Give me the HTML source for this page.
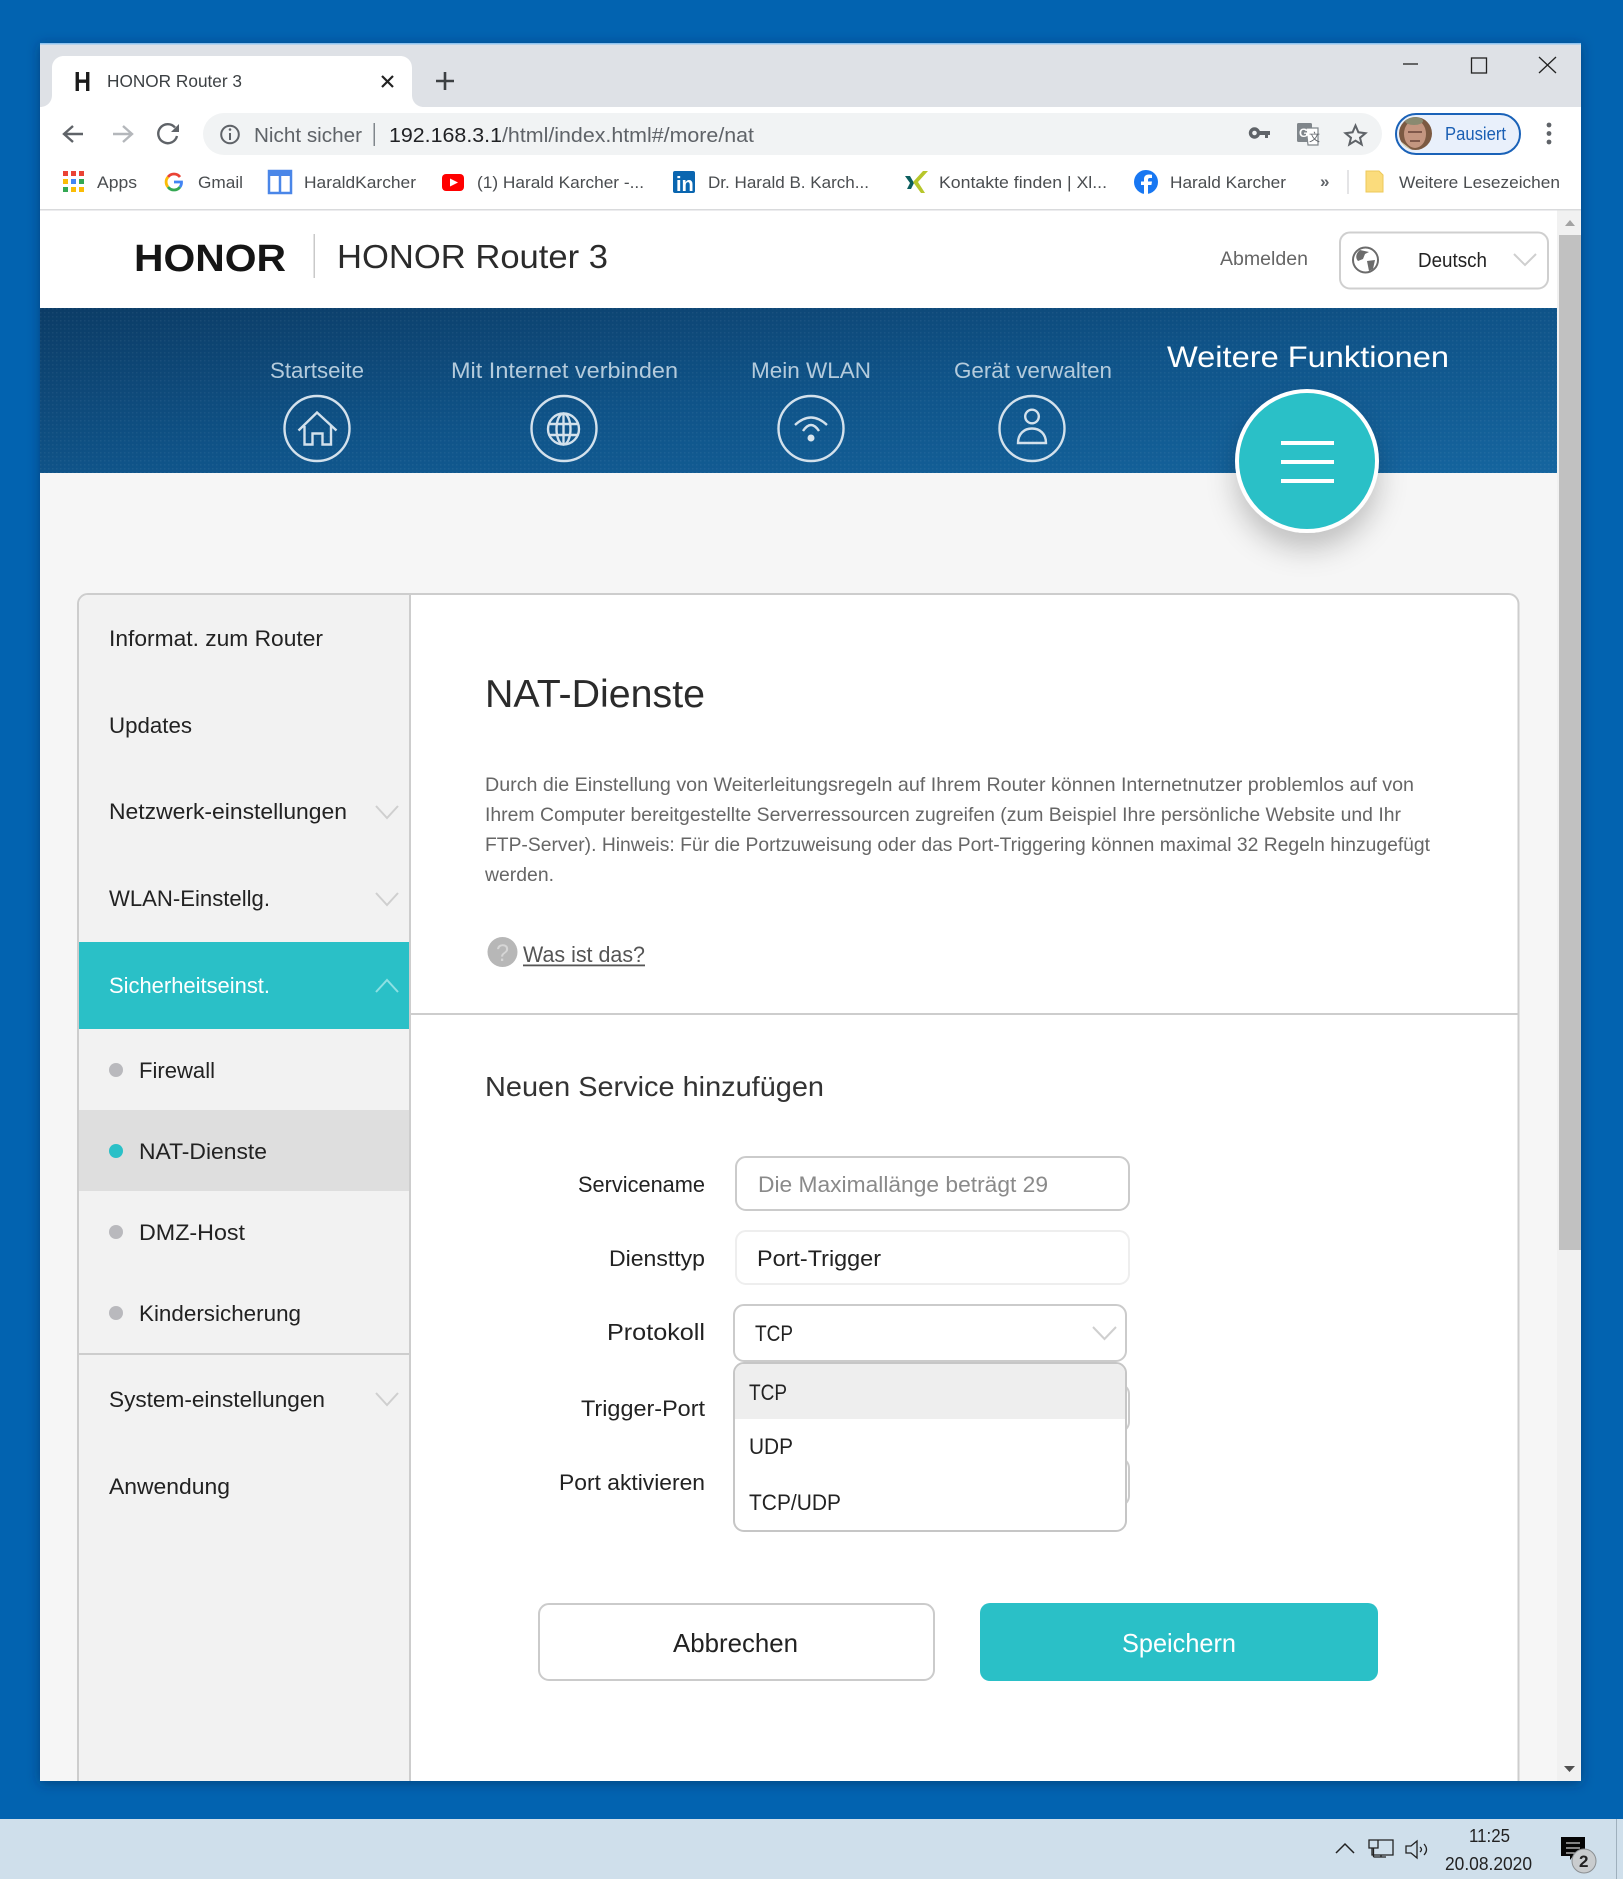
<!DOCTYPE html>
<html lang="de"><head><meta charset="utf-8"><title>HONOR Router 3</title>
<style>
html,body{margin:0;padding:0;width:1623px;height:1879px;overflow:hidden;background:#0263b0}
svg{display:block}
text{font-family:"Liberation Sans","Noto Sans CJK SC",sans-serif}
.bm{font-size:17px;fill:#4a4d50}
.sb{font-size:22px;fill:#222}
.lb{font-size:22px;fill:#222}
.nav{font-size:22px;fill:#b4cbdc}
.p{font-size:19.5px;fill:#666}
.ic{fill:none;stroke:#d3e1ec;stroke-width:2.4}
.chev{fill:none;stroke:#cfcfcf;stroke-width:2}
.tb{fill:none;stroke:#5f6368;stroke-width:2.4}
</style></head><body>
<svg width="1623" height="1879" viewBox="0 0 1623 1879" xmlns="http://www.w3.org/2000/svg">
<defs>
<linearGradient id="ban" x1="0" y1="0" x2="1" y2="1"><stop offset="0" stop-color="#0c3c66"/><stop offset=".5" stop-color="#0f5388"/><stop offset="1" stop-color="#15659f"/></linearGradient>
<pattern id="dots" width="4" height="4" patternUnits="userSpaceOnUse"><rect width="1.500" height="1.500" fill="#fff" fill-opacity=".05"/></pattern>
<filter id="sh" x="-40%" y="-40%" width="180%" height="200%"><feDropShadow dx="0" dy="16" stdDeviation="14" flood-color="#000" flood-opacity=".22"/></filter>
<filter id="ws" x="-3%" y="-3%" width="106%" height="106%"><feDropShadow dx="0" dy="2" stdDeviation="6" flood-color="#002c55" flood-opacity=".55"/></filter>
<clipPath id="av"><circle cx="1415.500" cy="133.500" r="16.500"/></clipPath>
<clipPath id="win"><rect x="40" y="43" width="1541" height="1738"/></clipPath>
</defs>

<rect width="1623" height="1879" fill="#0263b0"/>
<rect x="40" y="43" width="1541" height="1738" fill="#fff" filter="url(#ws)"/>
<g clip-path="url(#win)">
<!-- chrome -->
<rect x="40" y="43" width="1541" height="64" fill="#dee1e6"/>
<rect x="40" y="43" width="1541" height="1.500" fill="#8dc3ef"/>
<path d="M40 107C47 107 52 102 52 95V68C52 61 57 56 64 56H400C407 56 412 61 412 68V95C412 102 417 107 424 107Z" fill="#fff"/>
<text x="74" y="91" font-size="28" font-weight="700" fill="#1b1b1b" textLength="17" lengthAdjust="spacingAndGlyphs">H</text>
<text x="107" y="87" font-size="17.500" fill="#3c4043" textLength="135" lengthAdjust="spacingAndGlyphs">HONOR Router 3</text>
<path d="M382 76L393 87M393 76L382 87" stroke="#222" stroke-width="2.200" fill="none"/>
<path d="M445 72V90M436 81H454" stroke="#3c4043" stroke-width="2.600" fill="none"/>
<path d="M1403 64H1418" stroke="#222" stroke-width="1.300"/>
<rect x="1471.500" y="58" width="15" height="15" fill="none" stroke="#222" stroke-width="1.300"/>
<path d="M1539 57L1556 73M1556 57L1539 73" stroke="#222" stroke-width="1.300" fill="none"/>

<!-- toolbar -->
<rect x="40" y="107" width="1541" height="102" fill="#fff"/>
<rect x="203" y="113" width="1179" height="42" rx="21" fill="#f1f3f4"/>
<path class="tb" d="M83 134H65M73 126L64 134L73 142"/>
<path d="M131 134H113M123 126L132 134L123 142" fill="none" stroke="#b4b7bb" stroke-width="2.400"/>
<path class="tb" d="M177 136A9.500 9.500 0 1 1 175 127.500"/><path d="M179 124V132H171Z" fill="#5f6368"/>
<circle cx="230" cy="134.500" r="8.800" fill="none" stroke="#5f6368" stroke-width="2"/><path d="M230 133V140" stroke="#5f6368" stroke-width="2"/><circle cx="230" cy="129.500" r="1.300" fill="#5f6368"/>
<text x="254" y="142" font-size="20.500" fill="#5f6368" textLength="108" lengthAdjust="spacingAndGlyphs">Nicht sicher</text>
<rect x="373.500" y="123" width="1.500" height="23" fill="#80868b"/>
<text x="389" y="142" font-size="20.500" textLength="365" lengthAdjust="spacingAndGlyphs" fill="#5f6368"><tspan fill="#202124">192.168.3.1</tspan>/html/index.html#/more/nat</text>
<circle cx="1254.500" cy="133" r="4" fill="none" stroke="#5f6368" stroke-width="3.400"/><path d="M1259 131H1270V135H1268V138H1265V135H1259Z" fill="#5f6368"/>
<rect x="1297" y="123" width="15" height="19" rx="1.500" fill="#80868b"/><path d="M1306 128H1318V145H1308Z" fill="#fff" stroke="#80868b" stroke-width="1.200"/>
<text x="1299" y="137" font-size="12" font-weight="700" fill="#fff">G</text><text x="1309" y="141" font-size="11" fill="#5f6368">文</text>
<path d="M1355.500 125.500L1358.400 132.300L1365.500 133.200L1360 137.800L1361.700 144.500L1355.500 140.700L1349.300 144.500L1351 137.800L1345.500 133.200L1352.600 132.300Z" fill="none" stroke="#5f6368" stroke-width="2"/>
<rect x="1396" y="114" width="124" height="40" rx="20" fill="#e9f0fb" stroke="#1a62b8" stroke-width="2"/>
<g clip-path="url(#av)"><rect x="1399" y="117" width="33" height="33" fill="#7c5a42"/><path d="M1399 140L1412 150H1399Z" fill="#d8d2b0"/><ellipse cx="1415" cy="134" rx="11" ry="14" fill="#c49680"/><ellipse cx="1414" cy="121" rx="9" ry="4" fill="#8a8a70"/><path d="M1408 132H1422M1410 141H1420" stroke="#6a4438" stroke-width="1.500"/></g>
<text x="1445" y="140" font-size="18.500" fill="#1a5fb4" textLength="61" lengthAdjust="spacingAndGlyphs">Pausiert</text>
<circle cx="1549" cy="125" r="2.400" fill="#5f6368"/><circle cx="1549" cy="133.500" r="2.400" fill="#5f6368"/><circle cx="1549" cy="142" r="2.400" fill="#5f6368"/>

<!-- bookmarks -->
<g>
<rect x="63" y="171" width="5" height="5" fill="#ea4335"/><rect x="71" y="171" width="5" height="5" fill="#ea4335"/><rect x="79" y="171" width="5" height="5" fill="#ea4335"/>
<rect x="63" y="179" width="5" height="5" fill="#fbbc05"/><rect x="71" y="179" width="5" height="5" fill="#4285f4"/><rect x="79" y="179" width="5" height="5" fill="#34a853"/>
<rect x="63" y="187" width="5" height="5" fill="#34a853"/><rect x="71" y="187" width="5" height="5" fill="#fbbc05"/><rect x="79" y="187" width="5" height="5" fill="#fbbc05"/>
</g>
<text class="bm" x="97" y="188" textLength="40" lengthAdjust="spacingAndGlyphs">Apps</text>
<path d="M180 177A7.500 7.500 0 0 0 168 177" fill="none" stroke="#ea4335" stroke-width="2.800"/><path d="M168 177A7.500 7.500 0 0 0 168 187" fill="none" stroke="#fbbc05" stroke-width="2.800"/><path d="M168 187A7.500 7.500 0 0 0 180 187" fill="none" stroke="#34a853" stroke-width="2.800"/><path d="M180 187A7.500 7.500 0 0 0 181.500 182H174" fill="none" stroke="#4285f4" stroke-width="2.800"/>
<text class="bm" x="198" y="188" textLength="45" lengthAdjust="spacingAndGlyphs">Gmail</text>
<rect x="269" y="171" width="22" height="22" fill="#fff" stroke="#4a86e8" stroke-width="2.500"/><rect x="269" y="171" width="22" height="5" fill="#4a86e8"/><path d="M280 176V193" stroke="#4a86e8" stroke-width="2.500"/>
<text class="bm" x="304" y="188" textLength="112" lengthAdjust="spacingAndGlyphs">HaraldKarcher</text>
<rect x="442" y="174" width="22" height="17" rx="4" fill="#f00"/><path d="M450 178.500L458 182.500L450 186.500Z" fill="#fff"/>
<text class="bm" x="477" y="188" textLength="167" lengthAdjust="spacingAndGlyphs">(1) Harald Karcher -...</text>
<rect x="673" y="171" width="22" height="22" rx="2" fill="#0a66b0"/><text x="676" y="191" font-size="20" font-weight="700" fill="#fff">in</text>
<text class="bm" x="708" y="188" textLength="161" lengthAdjust="spacingAndGlyphs">Dr. Harald B. Karch...</text>
<path d="M905 176L910 183L907 189H911L914 183L910 176Z" fill="#0b5e5e"/><path d="M924 171L914 182L921 193H917L909 182L919 171Z" fill="#b7c62b" transform="translate(4 0)"/>
<text class="bm" x="939" y="188" textLength="168" lengthAdjust="spacingAndGlyphs">Kontakte finden | Xl...</text>
<circle cx="1146" cy="182" r="12" fill="#1877f2"/><path d="M1144 194V185H1141V181.500H1144V179C1144 176 1146 174.500 1149 174.500L1152 174.800V178H1150C1148.500 178 1148 178.800 1148 180V181.500H1152L1151.400 185H1148V194Z" fill="#fff"/>
<text class="bm" x="1170" y="188" textLength="116" lengthAdjust="spacingAndGlyphs">Harald Karcher</text>
<text x="1320" y="187" font-size="17" fill="#5f6368" font-weight="700">»</text>
<rect x="1347.500" y="170" width="1" height="24" fill="#c8cacd"/>
<path d="M1366 171H1379L1383 175V192H1366Z" fill="#fbdc7c" stroke="#eec95a"/>
<text class="bm" x="1399" y="188" textLength="161" lengthAdjust="spacingAndGlyphs">Weitere Lesezeichen</text>
<rect x="40" y="209" width="1541" height="1.500" fill="#d9dadc"/>

<!-- page -->
<rect x="40" y="210.500" width="1518" height="97.500" fill="#fff"/>
<rect x="40" y="473" width="1518" height="1308" fill="#f6f6f6"/>
<text x="134" y="271" font-size="38" font-weight="700" fill="#151515" textLength="152" lengthAdjust="spacingAndGlyphs">HONOR</text>
<rect x="313.500" y="234" width="1.500" height="44" fill="#c9c9c9"/>
<text x="337" y="268" font-size="33.500" fill="#2b2b2b" textLength="271" lengthAdjust="spacingAndGlyphs">HONOR Router 3</text>
<text x="1220" y="265" font-size="19.500" fill="#666" textLength="88" lengthAdjust="spacingAndGlyphs">Abmelden</text>
<rect x="1340" y="232.500" width="208" height="56" rx="10" fill="#fff" stroke="#cfcfcf" stroke-width="2"/>
<circle cx="1365.500" cy="260" r="12.500" fill="#fff" stroke="#6b6b6b" stroke-width="2"/><path d="M1360 250C1356 253 1355 258 1358 261L1363 259L1365 254L1369 252Z M1367 261L1375 260L1373 269L1369 271Z" fill="#6b6b6b"/>
<text x="1418" y="267" font-size="20" fill="#222" textLength="69" lengthAdjust="spacingAndGlyphs">Deutsch</text>
<path class="chev" d="M1514 254L1525 265L1536 254"/>

<!-- banner -->
<rect x="40" y="308" width="1517" height="165" fill="url(#ban)"/>
<rect x="40" y="308" width="1517" height="165" fill="url(#dots)"/>
<text class="nav" x="270" y="378" textLength="94" lengthAdjust="spacingAndGlyphs">Startseite</text>
<text class="nav" x="451" y="378" textLength="227" lengthAdjust="spacingAndGlyphs">Mit Internet verbinden</text>
<text class="nav" x="751" y="378" textLength="120" lengthAdjust="spacingAndGlyphs">Mein WLAN</text>
<text class="nav" x="954" y="378" textLength="158" lengthAdjust="spacingAndGlyphs">Gerät verwalten</text>
<text x="1167" y="367" font-size="30" font-weight="400" fill="#fff" textLength="282" lengthAdjust="spacingAndGlyphs">Weitere Funktionen</text>
<circle class="ic" cx="317" cy="428.500" r="32.500"/><circle class="ic" cx="564" cy="428.500" r="32.500"/><circle class="ic" cx="811" cy="428.500" r="32.500"/><circle class="ic" cx="1032" cy="428.500" r="32.500"/>
<path class="ic" d="M298.500 430.500L317 412.500L336.500 430.500M304.500 426V444.500H312.500V433.500H322.500V444.500H331V426"/>
<circle class="ic" cx="563.500" cy="429" r="15.500"/><ellipse class="ic" cx="563.500" cy="429" rx="7" ry="15.500"/><path class="ic" d="M563.500 414V444M549 424H578M549 435H578" stroke-width="2"/>
<path class="ic" d="M795 425Q811 410 827 425M803 431Q811 419 819 431"/><circle cx="811" cy="438" r="3.500" fill="#d9e5ee"/>
<circle class="ic" cx="1032" cy="416.500" r="6.800"/><path class="ic" d="M1018 443C1018 434 1024 428.500 1032 428.500C1040 428.500 1046 434 1046 443Z"/>
<circle cx="1307" cy="461" r="70" fill="#2ac0c7" stroke="#fff" stroke-width="4" filter="url(#sh)"/>
<rect x="1281" y="441" width="53" height="4" fill="#fff"/><rect x="1281" y="460" width="53" height="4" fill="#fff"/><rect x="1281" y="479" width="53" height="4" fill="#fff"/>

<!-- panel -->
<path d="M78 1790V604A10 10 0 0 1 88 594H1508.500A10 10 0 0 1 1518.500 604V1790Z" fill="#fff" stroke="#cdcdcd" stroke-width="2"/>
<path d="M79 1790V604A9 9 0 0 1 88 595H409V1790Z" fill="#f2f2f2"/>
<rect x="409" y="594" width="2" height="1196" fill="#cdcdcd"/>
<rect x="410" y="1013" width="1109" height="2" fill="#cdcdcd"/>
<text class="sb" x="109" y="646" textLength="214" lengthAdjust="spacingAndGlyphs">Informat. zum Router</text>
<text class="sb" x="109" y="733" textLength="83" lengthAdjust="spacingAndGlyphs">Updates</text>
<text class="sb" x="109" y="819" textLength="238" lengthAdjust="spacingAndGlyphs">Netzwerk-einstellungen</text>
<path class="chev" d="M376 806L387 818L398 806"/>
<text class="sb" x="109" y="906" textLength="161" lengthAdjust="spacingAndGlyphs">WLAN-Einstellg.</text>
<path class="chev" d="M376 893L387 905L398 893"/>
<rect x="79" y="942" width="330" height="87" fill="#2ac0c7"/>
<text x="109" y="993" font-size="22" fill="#fff" textLength="161" lengthAdjust="spacingAndGlyphs">Sicherheitseinst.</text>
<path d="M376 992L387 980L398 992" fill="none" stroke="#8ee0e3" stroke-width="2"/>
<circle cx="116" cy="1070" r="7" fill="#b9b9bd"/>
<text class="sb" x="139" y="1078" textLength="76" lengthAdjust="spacingAndGlyphs">Firewall</text>
<rect x="79" y="1110" width="330" height="81" fill="#dedede"/>
<circle cx="116" cy="1151" r="7" fill="#2ac0c7"/>
<text class="sb" x="139" y="1159" textLength="128" lengthAdjust="spacingAndGlyphs">NAT-Dienste</text>
<circle cx="116" cy="1232" r="7" fill="#b9b9bd"/>
<text class="sb" x="139" y="1240" textLength="106" lengthAdjust="spacingAndGlyphs">DMZ-Host</text>
<circle cx="116" cy="1313" r="7" fill="#b9b9bd"/>
<text class="sb" x="139" y="1321" textLength="162" lengthAdjust="spacingAndGlyphs">Kindersicherung</text>
<rect x="79" y="1353" width="330" height="2" fill="#cdcdcd"/>
<text class="sb" x="109" y="1407" textLength="216" lengthAdjust="spacingAndGlyphs">System-einstellungen</text>
<path class="chev" d="M376 1393L387 1405L398 1393"/>
<text class="sb" x="109" y="1494" textLength="121" lengthAdjust="spacingAndGlyphs">Anwendung</text>

<!-- content -->
<text x="485" y="707" font-size="39" fill="#2b2b2b" textLength="220" lengthAdjust="spacingAndGlyphs">NAT-Dienste</text>
<text class="p" x="485" y="791" textLength="929" lengthAdjust="spacingAndGlyphs">Durch die Einstellung von Weiterleitungsregeln auf Ihrem Router können Internetnutzer problemlos auf von</text>
<text class="p" x="485" y="821" textLength="916" lengthAdjust="spacingAndGlyphs">Ihrem Computer bereitgestellte Serverressourcen zugreifen (zum Beispiel Ihre persönliche Website und Ihr</text>
<text class="p" x="485" y="851" textLength="945" lengthAdjust="spacingAndGlyphs">FTP-Server). Hinweis: Für die Portzuweisung oder das Port-Triggering können maximal 32 Regeln hinzugefügt</text>
<text class="p" x="485" y="881" textLength="69" lengthAdjust="spacingAndGlyphs">werden.</text>
<circle cx="502.500" cy="952" r="15" fill="#b7b7b7"/>
<text x="496" y="961" font-size="24" fill="#d6d6d6" textLength="13" lengthAdjust="spacingAndGlyphs">?</text>
<text x="523" y="962" font-size="22" fill="#555" textLength="122" lengthAdjust="spacingAndGlyphs">Was ist das?</text>
<rect x="523" y="964.500" width="122" height="1.800" fill="#555"/>

<text x="485" y="1096" font-size="27.500" fill="#333" textLength="339" lengthAdjust="spacingAndGlyphs">Neuen Service hinzufügen</text>

<text class="lb" x="578" y="1192" textLength="127" lengthAdjust="spacingAndGlyphs">Servicename</text>
<rect x="736" y="1157" width="393" height="53" rx="10" fill="#fff" stroke="#cbcbcb" stroke-width="2"/>
<text x="758" y="1192" font-size="22" fill="#8a8a8a" textLength="290" lengthAdjust="spacingAndGlyphs">Die Maximallänge beträgt 29</text>
<text class="lb" x="609" y="1266" textLength="96" lengthAdjust="spacingAndGlyphs">Diensttyp</text>
<rect x="736" y="1231" width="393" height="53" rx="10" fill="#fff" stroke="#eeeeee" stroke-width="2"/>
<text class="lb" x="757" y="1266" textLength="124" lengthAdjust="spacingAndGlyphs">Port-Trigger</text>
<text x="607" y="1340" font-size="23.500" fill="#222" textLength="98" lengthAdjust="spacingAndGlyphs">Protokoll</text>
<rect x="734" y="1305" width="392" height="56" rx="10" fill="#fff" stroke="#cbcbcb" stroke-width="2"/>
<text class="lb" x="755" y="1341" textLength="38" lengthAdjust="spacingAndGlyphs">TCP</text>
<path class="chev" d="M1093 1327L1104.500 1339L1116 1327"/>
<text class="lb" x="581" y="1416" textLength="124" lengthAdjust="spacingAndGlyphs">Trigger-Port</text>
<text class="lb" x="559" y="1490" textLength="146" lengthAdjust="spacingAndGlyphs">Port aktivieren</text>
<rect x="1000" y="1384" width="129" height="48" rx="10" fill="#fff" stroke="#cbcbcb" stroke-width="2"/>
<rect x="1000" y="1458" width="129" height="48" rx="10" fill="#fff" stroke="#cbcbcb" stroke-width="2"/>
<rect x="734" y="1363" width="392" height="168" rx="10" fill="#fff" stroke="#c6c6c6" stroke-width="2"/>
<path d="M735 1419V1373A9 9 0 0 1 744 1364H1116A9 9 0 0 1 1125 1373V1419Z" fill="#eeeeee"/>
<text class="lb" x="749" y="1400" textLength="38" lengthAdjust="spacingAndGlyphs">TCP</text>
<text class="lb" x="749" y="1454" textLength="44" lengthAdjust="spacingAndGlyphs">UDP</text>
<text class="lb" x="749" y="1510" textLength="92" lengthAdjust="spacingAndGlyphs">TCP/UDP</text>

<rect x="539" y="1604" width="395" height="76" rx="10" fill="#fff" stroke="#cbcbcb" stroke-width="2"/>
<text x="673" y="1652" font-size="26" fill="#222" textLength="125" lengthAdjust="spacingAndGlyphs">Abbrechen</text>
<rect x="980" y="1603" width="398" height="78" rx="10" fill="#2ac0c7"/>
<text x="1122" y="1652" font-size="26" fill="#fff" textLength="114" lengthAdjust="spacingAndGlyphs">Speichern</text>

<!-- scrollbar -->
<rect x="1557" y="210.500" width="24" height="1570.500" fill="#f1f1f1"/>
<path d="M1565 226H1575L1570 220Z" fill="#a3a3a3"/>
<rect x="1559" y="235" width="22" height="1015" fill="#c1c1c1"/>
<path d="M1564 1766H1575L1569.500 1772Z" fill="#505050"/>
</g>

<!-- taskbar -->
<rect x="0" y="1819" width="1623" height="60" fill="#cfdfeb"/>
<rect x="1616" y="1819" width="1" height="60" fill="#9fb0bd"/>
<path d="M1336 1853L1345 1844L1354 1853" fill="none" stroke="#222" stroke-width="1.500"/>
<path d="M1378 1840H1393V1855H1372V1848M1369 1840H1378V1848H1369ZM1373.500 1848V1857M1373.500 1857H1386M1381 1855V1857" fill="none" stroke="#222" stroke-width="1.300"/>
<path d="M1406 1846H1411L1417 1841V1858L1411 1853H1406ZM1420 1847Q1423 1849.500 1420 1852M1424 1844Q1429 1849.500 1424 1855" fill="none" stroke="#222" stroke-width="1.300"/>
<text x="1469" y="1842" font-size="18" fill="#222" textLength="41" lengthAdjust="spacingAndGlyphs">11:25</text>
<text x="1445" y="1870" font-size="18" fill="#222" textLength="87" lengthAdjust="spacingAndGlyphs">20.08.2020</text>
<path d="M1561 1837H1585V1856H1573L1570 1860V1856H1561Z" fill="#050505"/>
<path d="M1566 1843H1580M1566 1848H1580M1566 1853H1575" stroke="#fff" stroke-width="1"/>
<circle cx="1584" cy="1861" r="12" fill="#c9ccce" stroke="#8b8f92" stroke-width="1"/>
<text x="1579" y="1867" font-size="17" font-weight="700" fill="#222">2</text>
</svg>
</body></html>
